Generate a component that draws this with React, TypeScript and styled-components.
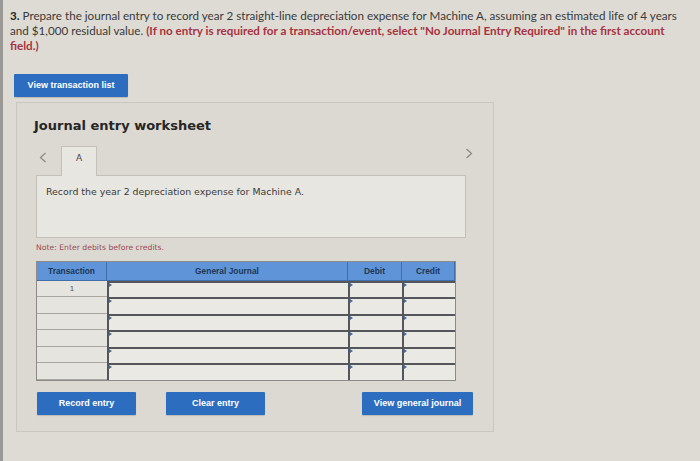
import React from "react";
import styled, { createGlobalStyle } from "styled-components";

const Global = createGlobalStyle`
  html, body { margin: 0; padding: 0; }
  body {
    background: #dedbd4;
    width: 700px;
    height: 461px;
    overflow: hidden;
    box-sizing: border-box;
    border-left: 3px solid #9a9894;
  }
`;

const Page = styled.div`
  padding: 8px 0 0 7px;
  font-family: "Lato", "Open Sans", sans-serif;
`;

const Question = styled.p`
  margin: 0;
  width: 690px;
  font-size: 11.65px;
  line-height: 15px;
  color: #3a3a3a;
  white-space: nowrap;
  strong { color: #222; }
  em { font-style: normal; font-weight: 700; color: #a8323f; }
`;

const Blue = styled.button<{ $w: number }>`
  width: ${(p) => p.$w}px;
  height: 23px;
  border: none;
  border-radius: 1px;
  background: #2d6dc0;
  color: #fff;
  font-family: "Liberation Sans", Arial, sans-serif;
  font-weight: 700;
  font-size: 9px;
  padding: 0;
  box-shadow: 0 1px 1px rgba(0,0,0,0.15);
`;

const TopButtons = styled.div`
  margin: 19px 0 0 4px;
`;

const Panel = styled.section`
  margin: 5px 0 0 6px;
  width: 478px;
  height: 330px;
  border: 1px solid #cac7c0;
  background: #dcd9d2;
  box-sizing: border-box;
  padding: 14px 0 0 19px;
  font-family: "DejaVu Sans", Verdana, sans-serif;
`;

const Title = styled.h2`
  margin: 0 0 0 -2px;
  font-size: 13px;
  font-weight: 700;
  color: #262626;
  line-height: 18px;
`;

const TabRow = styled.div`
  margin-top: 11px;
  width: 431px;
  height: 29px;
  display: flex;
  align-items: flex-start;
`;

const ChevronBox = styled.span`
  width: 25px;
  padding: 6px 0 0 3px;
  box-sizing: border-box;
  display: flex;
`;

const Tab = styled.div`
  width: 36px;
  height: 30px;
  box-sizing: border-box;
  border: 1px solid #c3c0b9;
  border-bottom: none;
  background: #e8e6e1;
  font-size: 9px;
  color: #444;
  text-align: center;
  padding-top: 6px;
  position: relative;
  z-index: 1;
`;

const Spacer = styled.div`
  flex: 1;
`;

const ChevronRightBox = styled.span`
  padding: 2px 0 0 0;
  margin-right: -6px;
  display: flex;
`;

const Content = styled.div`
  width: 430px;
  height: 63px;
  box-sizing: border-box;
  border: 1px solid #c3c0b9;
  background: #e8e6e1;
  padding: 10px 0 0 9px;
  font-size: 9.4px;
  color: #3a3a3a;
`;

const Note = styled.div`
  margin-top: 5px;
  font-size: 7.7px;
  color: #9a4a55;
  height: 18px;
`;

const Table = styled.div`
  width: 420px;
  display: grid;
  grid-template-columns: 70px 241px 54px 53px;
  grid-template-rows: 19px repeat(6, 16.5px);
  border: 1px solid #8c8a87;
  box-sizing: border-box;
  background: #e4e2dc;
`;

const Head = styled.div`
  background: #5f95d8;
  border-right: 1px solid #3f6ea8;
  border-bottom: 1px solid #3f6ea8;
  color: #1e3556;
  font-family: "Liberation Sans", Arial, sans-serif;
  font-weight: 700;
  font-size: 8.4px;
  display: flex;
  align-items: center;
  justify-content: center;
  &:last-child { border-right: none; }
`;

const TxCell = styled.div`
  box-sizing: border-box;
  border-bottom: 1px solid #a9a7a2;
  font-family: "Liberation Sans", Arial, sans-serif;
  font-size: 8px;
  color: #555;
  text-align: center;
  padding-top: 3px;
  background: #e6e4de;
`;

const InputCell = styled.div`
  box-sizing: border-box;
  border-top: 2px solid #55555c;
  border-left: 2px solid #55555c;
  background: #ebe9e4;
  position: relative;
  &::before {
    content: "";
    position: absolute;
    left: 0;
    top: 0;
    border-left: 3px solid #4a6a9a;
    border-top: 2px solid transparent;
    border-bottom: 2px solid transparent;
  }
`;

const Actions = styled.div`
  margin-top: 11px;
  display: flex;
  width: 437px;
`;

const ActionGap = styled.div<{ $w: number }>`
  width: ${(p) => p.$w}px;
  flex: none;
`;

const rows = [0, 1, 2, 3, 4, 5];

const Chev = ({ dir }: { dir: "left" | "right" }) => (
  <svg width="8" height="11" viewBox="0 0 8 11">
    <polyline
      points={dir === "left" ? "6.5,1 1.5,5.5 6.5,10" : "1.5,1 6.5,5.5 1.5,10"}
      fill="none"
      stroke="#8d8b87"
      strokeWidth="1.3"
    />
  </svg>
);

export default function App() {
  return (
    <>
      <Global />
      <Page>
        <Question>
          <strong>3.</strong> Prepare the journal entry to record year 2 straight-line depreciation expense for
          Machine A, assuming an estimated life of 4 years
          <br />
          and $1,000 residual value.{" "}
          <em>(If no entry is required for a transaction/event, select "No Journal Entry Required" in the first account</em>
          <br />
          <em>field.)</em>
        </Question>
        <TopButtons>
          <Blue $w={114}>View transaction list</Blue>
        </TopButtons>
        <Panel>
          <Title>Journal entry worksheet</Title>
          <TabRow>
            <ChevronBox>
              <Chev dir="left" />
            </ChevronBox>
            <Tab>A</Tab>
            <Spacer />
            <ChevronRightBox>
              <Chev dir="right" />
            </ChevronRightBox>
          </TabRow>
          <Content>Record the year 2 depreciation expense for Machine A.</Content>
          <Note>Note: Enter debits before credits.</Note>
          <Table>
            <Head>Transaction</Head>
            <Head>General Journal</Head>
            <Head>Debit</Head>
            <Head>Credit</Head>
            {rows.map((r) => (
              <React.Fragment key={r}>
                <TxCell>{r === 0 ? "1" : ""}</TxCell>
                <InputCell />
                <InputCell />
                <InputCell />
              </React.Fragment>
            ))}
          </Table>
          <Actions>
            <ActionGap $w={1} />
            <Blue $w={99}>Record entry</Blue>
            <ActionGap $w={30} />
            <Blue $w={99}>Clear entry</Blue>
            <ActionGap $w={97} />
            <Blue $w={111}>View general journal</Blue>
          </Actions>
        </Panel>
      </Page>
    </>
  );
}
